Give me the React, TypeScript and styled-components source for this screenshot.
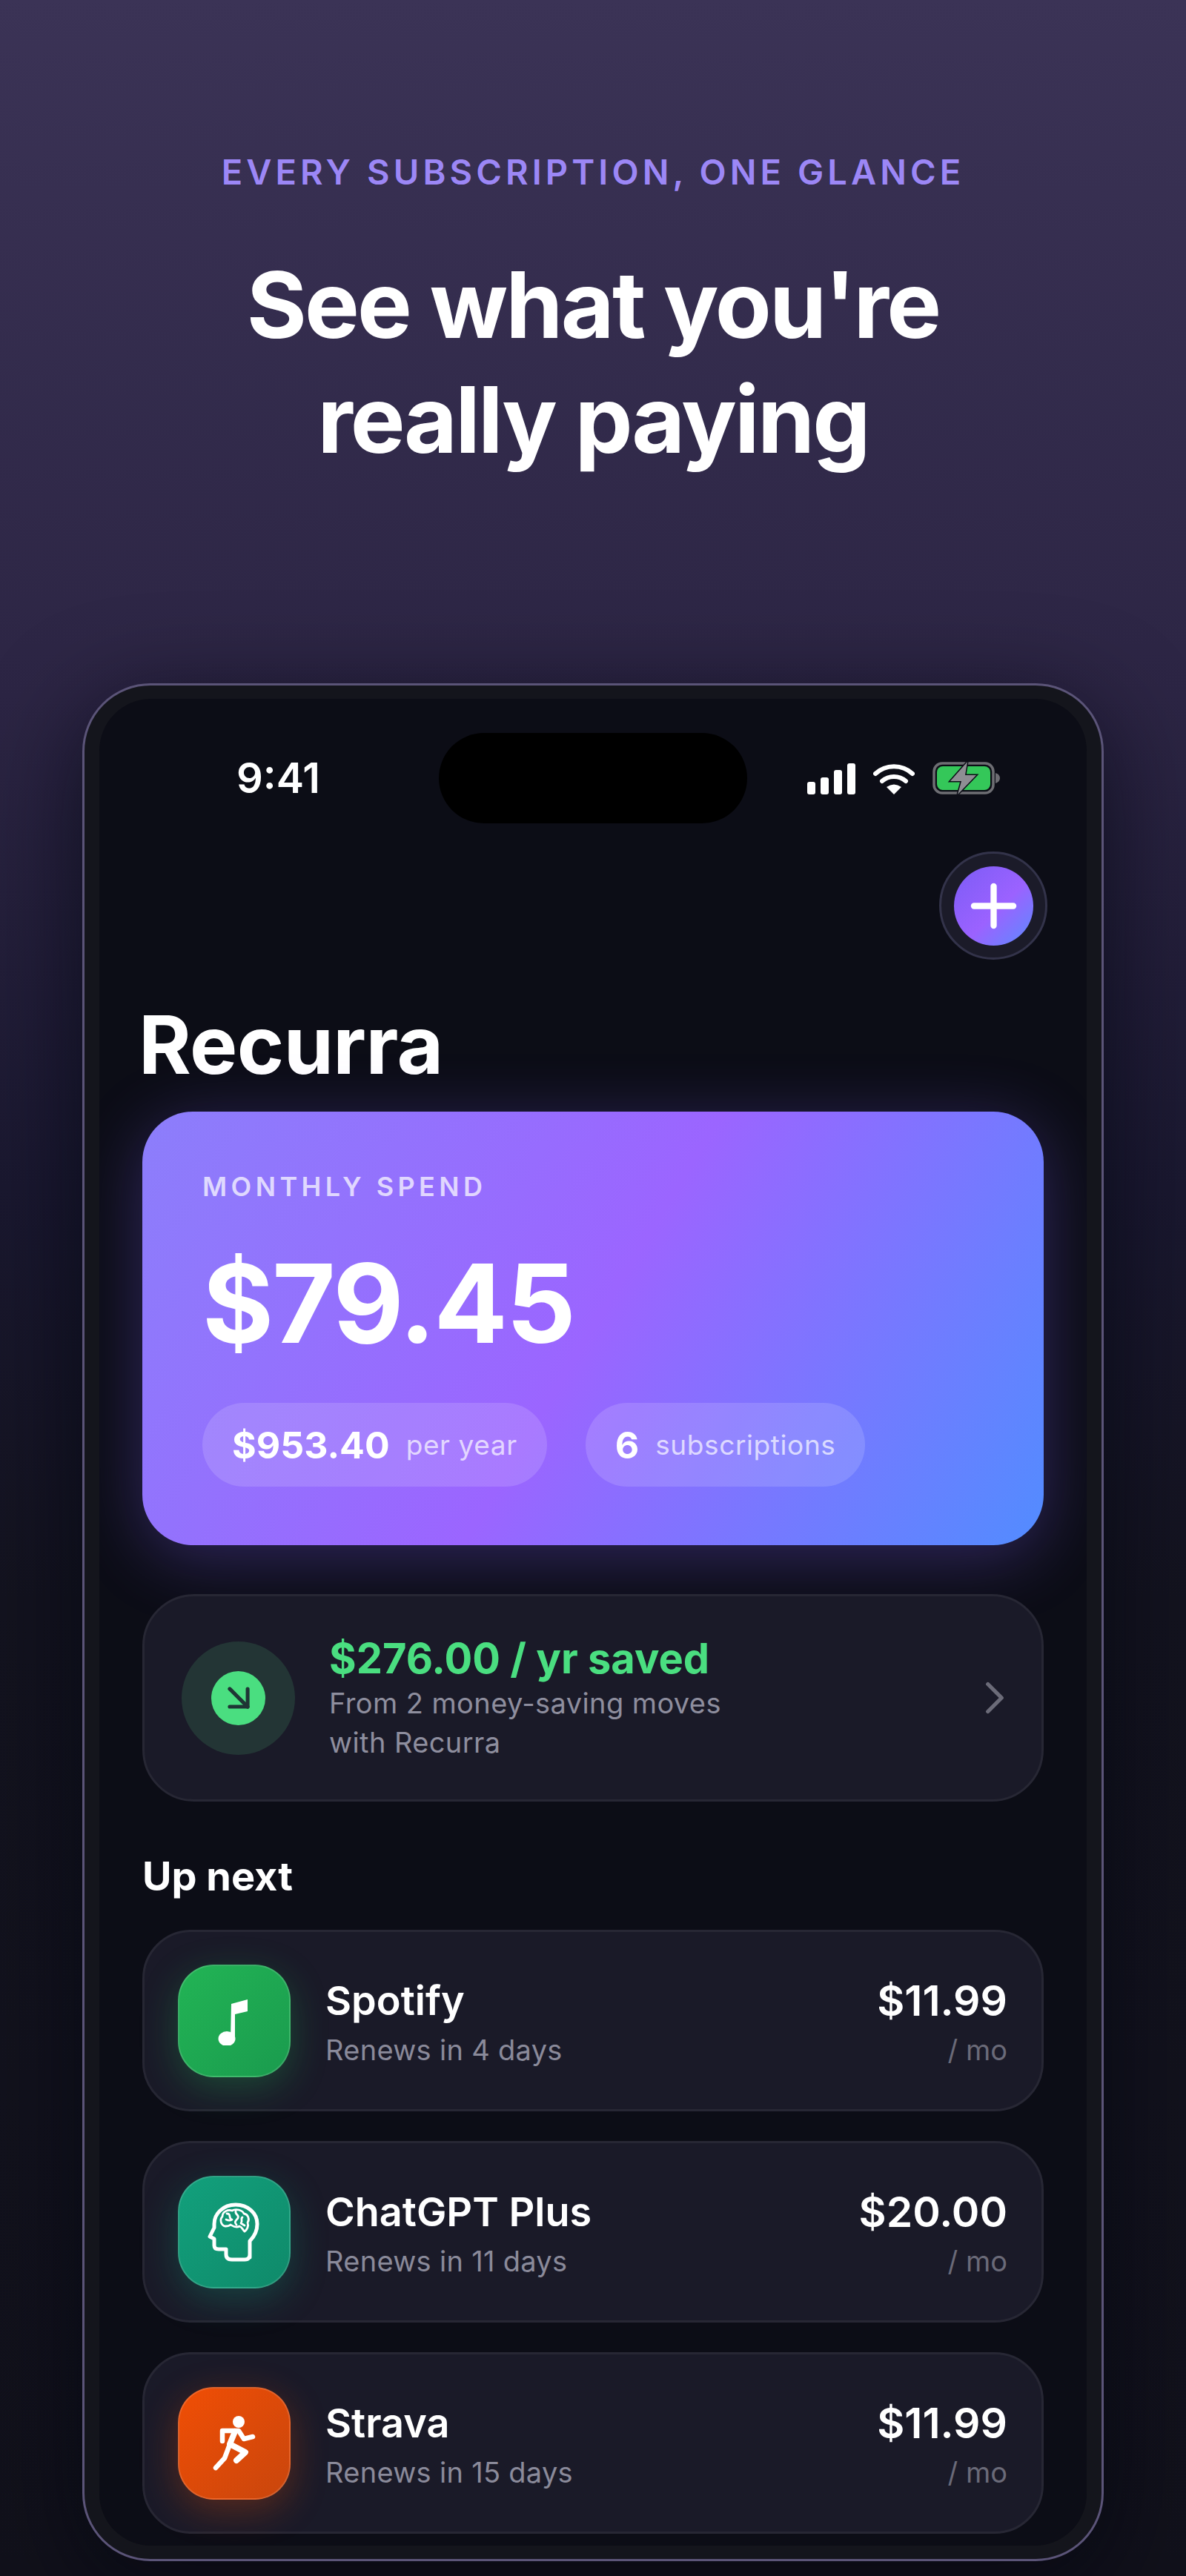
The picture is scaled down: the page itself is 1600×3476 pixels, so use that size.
import styled, { createGlobalStyle } from "styled-components";
import { ArrowDownRight, ChevronRight, Plus } from "lucide-react";

const GlobalStyle = createGlobalStyle`
  html, body {
    margin: 0;
    padding: 0;
    background: #0a0b14;
  }
  * {
    box-sizing: border-box;
  }
`;

const Page = styled.div`
  width: 1600px;
  height: 3476px;
  overflow: hidden;
  padding-top: 204px;
  font-family: Inter, "Liberation Sans", sans-serif;
  color: #fff;
  text-align: center;
  background: linear-gradient(180deg, #3b3356 0%, #2c2544 27%, #1a1830 46%, #13131f 62%, #11111b 100%);
`;

const Eyebrow = styled.div`
  font-size: 47px;
  line-height: 56px;
  font-weight: 600;
  letter-spacing: 5.1px;
  color: #9c87f6;
`;

const Headline = styled.h1`
  margin: 74px 0 0;
  font-size: 124px;
  line-height: 155px;
  font-weight: 700;
  letter-spacing: -2.8px;
`;

const Phone = styled.div`
  width: 1378px;
  height: 2534px;
  margin: 278px auto 0;
  padding: 18px 20px;
  border: 3px solid #5b5478;
  border-radius: 92px;
  background: #14151c;
  box-shadow: 0 30px 130px rgba(3, 4, 14, 0.65);
  text-align: left;
`;

const Screen = styled.div`
  height: 100%;
  border-radius: 70px;
  background: #0c0d16;
  overflow: hidden;
`;

const StatusBar = styled.div`
  display: grid;
  grid-template-columns: 1fr 416px 1fr;
  align-items: center;
  height: 122px;
  margin-top: 46px;
`;

const Time = styled.div`
  padding-left: 185px;
  font-size: 56px;
  font-weight: 600;
  line-height: 1;
`;

const Island = styled.div`
  height: 122px;
  border-radius: 61px;
  background: #000;
`;

const StatusIcons = styled.div`
  display: flex;
  align-items: flex-end;
  justify-content: flex-end;
  gap: 24px;
  padding-right: 116px;
`;

const Toolbar = styled.div`
  display: flex;
  justify-content: flex-end;
  margin-top: 38px;
  padding-right: 53px;
`;

const AddRing = styled.div`
  display: flex;
  align-items: center;
  justify-content: center;
  width: 146px;
  height: 146px;
  border: 3px solid #33334a;
  border-radius: 50%;
  background: #1b1b29;
`;

const AddButton = styled.div`
  display: flex;
  align-items: center;
  justify-content: center;
  width: 107px;
  height: 107px;
  border-radius: 50%;
  color: #fff;
  background: linear-gradient(135deg, #7c5cf6 0%, #9b62ff 55%, #5b8cff 100%);
`;

const Title = styled.h2`
  margin: 50px 0 0 53px;
  font-size: 108px;
  line-height: 130px;
  font-weight: 700;
  letter-spacing: -0.6px;
`;

const Content = styled.div`
  display: flex;
  flex-direction: column;
  padding: 0 58px;
`;

const Hero = styled.section`
  height: 585px;
  margin-top: 25px;
  padding: 81px 81px 0;
  border-radius: 68px;
  background: linear-gradient(121deg, #8c7efb 0%, #9b65ff 50%, #528cff 100%);
  box-shadow: 0 16px 90px rgba(124, 92, 246, 0.32);
`;

const HeroLabel = styled.div`
  font-size: 36px;
  line-height: 40px;
  font-weight: 600;
  letter-spacing: 5.4px;
  color: rgba(255, 255, 255, 0.72);
`;

const HeroAmount = styled.div`
  margin-top: 49px;
  font-size: 147px;
  line-height: 178px;
  font-weight: 700;
  letter-spacing: -2px;
`;

const PillRow = styled.div`
  display: flex;
  gap: 52px;
  margin-top: 45px;
`;

const Pill = styled.div`
  display: flex;
  align-items: center;
  gap: 22px;
  height: 113px;
  padding: 0 40px;
  border-radius: 57px;
  background: rgba(255, 255, 255, 0.14);
`;

const PillValue = styled.span`
  font-size: 50px;
  font-weight: 700;
`;

const PillUnit = styled.span`
  font-size: 37px;
  letter-spacing: 0.6px;
  color: rgba(255, 255, 255, 0.7);
`;

const Savings = styled.section`
  display: flex;
  align-items: center;
  height: 280px;
  margin-top: 66px;
  padding: 0 26px 0 50px;
  border: 3px solid #272734;
  border-radius: 70px;
  background: #1a1a28;
`;

const SavingsHalo = styled.div`
  display: flex;
  align-items: center;
  justify-content: center;
  flex: none;
  width: 153px;
  height: 153px;
  border-radius: 50%;
  background: #233535;
`;

const SavingsDot = styled.div`
  display: flex;
  align-items: center;
  justify-content: center;
  width: 73px;
  height: 73px;
  border-radius: 50%;
  color: #1f3535;
  background: #4ade80;
`;

const SavingsText = styled.div`
  flex: 1;
  margin-left: 46px;
`;

const SavingsTitle = styled.div`
  font-size: 56px;
  line-height: 68px;
  font-weight: 700;
  color: #4ade80;
`;

const SavingsSub = styled.div`
  width: 560px;
  font-size: 38px;
  line-height: 53px;
  letter-spacing: 0.4px;
  color: #8e8e9e;
`;

const SectionTitle = styled.h3`
  margin: 70px 0 0;
  font-size: 54px;
  line-height: 62px;
  font-weight: 700;
`;

const RowList = styled.div`
  display: flex;
  flex-direction: column;
  gap: 40px;
  margin-top: 41px;
`;

const Row = styled.div`
  display: flex;
  align-items: center;
  flex: none;
  height: 245px;
  padding: 0 46px 0 45px;
  border: 3px solid #272734;
  border-radius: 66px;
  background: #1a1a28;
`;

const AppIcon = styled.div<{ $from: string; $to: string; $glow: string }>`
  display: flex;
  align-items: center;
  justify-content: center;
  flex: none;
  width: 152px;
  height: 152px;
  border: 2px solid rgba(255, 255, 255, 0.14);
  border-radius: 48px;
  background: linear-gradient(135deg, ${(p) => p.$from}, ${(p) => p.$to});
  box-shadow: 0 14px 50px ${(p) => p.$glow};
`;

const RowText = styled.div`
  flex: 1;
  margin-left: 47px;
  padding-top: 4px;
`;

const RowName = styled.div`
  font-size: 54px;
  line-height: 68px;
  font-weight: 600;
`;

const RowSub = styled.div`
  margin-top: 7px;
  font-size: 38px;
  line-height: 50px;
  letter-spacing: 0.3px;
  color: #8a8a9a;
`;

const RowPrice = styled.div`
  padding-top: 4px;
  text-align: right;
`;

const PriceValue = styled.div`
  font-size: 57px;
  line-height: 68px;
  font-weight: 600;
`;

const PriceUnit = styled.div`
  margin-top: 7px;
  font-size: 38px;
  line-height: 50px;
  color: #6a6a78;
`;

const SignalIcon = () => (
  <svg width="65" height="42" viewBox="0 0 65 42" fill="#fff">
    <rect x="0" y="25" width="11" height="17" rx="3" />
    <rect x="18" y="19" width="11" height="23" rx="3" />
    <rect x="36" y="9" width="11" height="33" rx="3" />
    <rect x="54" y="0" width="11" height="42" rx="3" />
  </svg>
);

const WifiIcon = () => (
  <svg width="56" height="42" viewBox="0 0 56 42">
    <path d="M3 14 C17 1 39 1 53 14" fill="none" stroke="#fff" strokeWidth="6" strokeLinecap="round" />
    <path d="M12 24 C21 16 35 16 44 24" fill="none" stroke="#fff" strokeWidth="6" strokeLinecap="round" />
    <path d="M18 32 Q28 25 38 32 L28 42 Z" fill="#fff" />
  </svg>
);

const BatteryIcon = () => (
  <svg width="92" height="44" viewBox="0 0 92 44">
    <rect x="2" y="2" width="80" height="40" rx="11" fill="none" stroke="#6e6e73" strokeWidth="3.5" />
    <rect x="6" y="6" width="72" height="32" rx="8" fill="#34c759" />
    <path d="M85 15 Q91 17 91 22 Q91 27 85 29 Z" fill="#6e6e73" />
    <path d="M47 0 L24 26 L39 26 L34 44 L59 18 L44 18 Z" fill="#8e8e93" stroke="#0c0d16" strokeWidth="3" paintOrder="stroke" />
  </svg>
);

const MusicIcon = () => (
  <svg width="48" height="66" viewBox="0 0 48 66" fill="#fff">
    <path d="M20 10 L42 4 V20 L25 24 V57 H19 Z" />
    <ellipse cx="14" cy="57" rx="11.5" ry="10" />
  </svg>
);

const BrainHeadIcon = () => (
  <svg width="72" height="84" viewBox="0 0 72 84" fill="none" stroke="#fff" strokeLinecap="round" strokeLinejoin="round">
    <path
      d="M57 76 V54 C63 48 67 40 67 31 C67 16 54 5 38 5 C21 5 9 17 9 31 V36 L3 48 L9 51 V60 Q9 65 15 65 H25 V72 Q25 79 33 79 H50 Q57 79 57 72"
      strokeWidth="5"
    />
    <path
      d="M24 34 C18 33 16 25 20 21 C20 14 28 11 33 13 C38 10 47 12 49 17 C55 18 57 25 54 29 C56 34 53 39 50 41 C47 39 47 35 43 34 C38 37 33 33 31 32 C29 34 26 34 24 34 Z"
      strokeWidth="2.8"
    />
    <path d="M26 17 C33 17 27 23 33 25 C30 27 27 26 25 25 M38 14 C37 19 43 18 41 23 C39 26 35 28 39 32 M47 22 C44 24 48 27 45 30 L50 33" strokeWidth="2.8" />
  </svg>
);

const RunnerIcon = () => (
  <svg width="60" height="76" viewBox="0 0 60 76" fill="none" stroke="#fff" strokeLinecap="round" strokeLinejoin="round">
    <circle cx="36" cy="9" r="8" fill="#fff" stroke="none" />
    <path d="M14 35 V21 H36 L43 32 L55 29" strokeWidth="6.5" />
    <path d="M31 22 L24 39 L45 50 L33 61" strokeWidth="8" />
    <path d="M23 42 L17 58 L5 71" strokeWidth="6.5" />
  </svg>
);

const rows = [
  { name: "Spotify", sub: "Renews in 4 days", price: "$11.99", from: "#22b455", to: "#1a9b4e", glow: "rgba(34, 180, 85, 0.3)", icon: <MusicIcon /> },
  { name: "ChatGPT Plus", sub: "Renews in 11 days", price: "$20.00", from: "#12a07c", to: "#0f8a6a", glow: "rgba(18, 160, 124, 0.3)", icon: <BrainHeadIcon /> },
  { name: "Strava", sub: "Renews in 15 days", price: "$11.99", from: "#f04e05", to: "#c9460d", glow: "rgba(240, 78, 5, 0.3)", icon: <RunnerIcon /> },
];

export default function App() {
  return (
    <Page>
      <GlobalStyle />
      <Eyebrow>EVERY SUBSCRIPTION, ONE GLANCE</Eyebrow>
      <Headline>
        See what you're
        <br />
        really paying
      </Headline>
      <Phone>
        <Screen>
          <StatusBar>
            <Time>9:41</Time>
            <Island />
            <StatusIcons>
              <SignalIcon />
              <WifiIcon />
              <BatteryIcon />
            </StatusIcons>
          </StatusBar>
          <Toolbar>
            <AddRing>
              <AddButton>
                <Plus size={91} strokeWidth={2.2} />
              </AddButton>
            </AddRing>
          </Toolbar>
          <Title>Recurra</Title>
          <Content>
            <Hero>
              <HeroLabel>MONTHLY SPEND</HeroLabel>
              <HeroAmount>$79.45</HeroAmount>
              <PillRow>
                <Pill>
                  <PillValue>$953.40</PillValue>
                  <PillUnit>per year</PillUnit>
                </Pill>
                <Pill>
                  <PillValue>6</PillValue>
                  <PillUnit>subscriptions</PillUnit>
                </Pill>
              </PillRow>
            </Hero>
            <Savings>
              <SavingsHalo>
                <SavingsDot>
                  <ArrowDownRight size={58} strokeWidth={2.1} />
                </SavingsDot>
              </SavingsHalo>
              <SavingsText>
                <SavingsTitle>$276.00 / yr saved</SavingsTitle>
                <SavingsSub>From 2 money-saving moves with Recurra</SavingsSub>
              </SavingsText>
              <ChevronRight size={74} strokeWidth={1.7} color="#6b6b78" />
            </Savings>
            <SectionTitle>Up next</SectionTitle>
            <RowList>
              {rows.map((r) => (
                <Row key={r.name}>
                  <AppIcon $from={r.from} $to={r.to} $glow={r.glow}>
                    {r.icon}
                  </AppIcon>
                  <RowText>
                    <RowName>{r.name}</RowName>
                    <RowSub>{r.sub}</RowSub>
                  </RowText>
                  <RowPrice>
                    <PriceValue>{r.price}</PriceValue>
                    <PriceUnit>/ mo</PriceUnit>
                  </RowPrice>
                </Row>
              ))}
            </RowList>
          </Content>
        </Screen>
      </Phone>
    </Page>
  );
}
